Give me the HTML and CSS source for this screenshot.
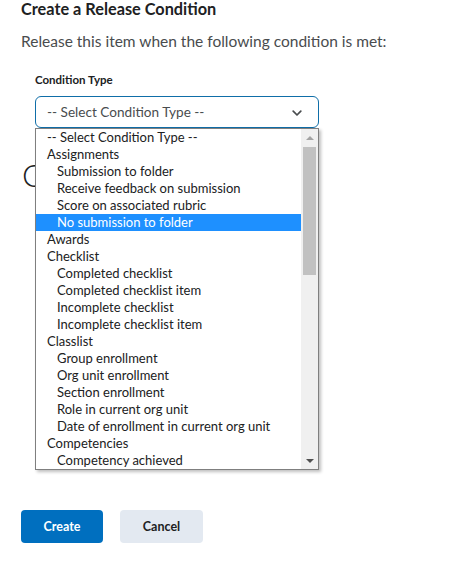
FILE: index.html
```html
<!DOCTYPE html>
<html lang="en">
<head>
<meta charset="utf-8">
<title>Create a Release Condition</title>
<link rel="stylesheet" href="styles.css">
</head>
<body>
<div class="page">
  <h1 class="title">Create a Release Condition</h1>
  <p class="intro">Release this item when the following condition is met:</p>

  <div class="field">
    <label class="field-label">Condition Type</label>
    <div class="select-wrap">
      <div class="select">
        <span class="select-text">-- Select Condition Type --</span>
        <svg class="chevron" width="10" height="7" viewBox="0 0 10 7"><path d="M1.2 1.2 L5 5 L8.8 1.2" fill="none" stroke="#494c4e" stroke-width="1.7" stroke-linecap="round" stroke-linejoin="round"/></svg>
      </div>
      <div class="dropdown">
        <ul class="options">
          <li class="group">-- Select Condition Type --</li>
          <li class="group">Assignments</li>
          <li class="opt">Submission to folder</li>
          <li class="opt">Receive feedback on submission</li>
          <li class="opt">Score on associated rubric</li>
          <li class="opt selected">No submission to folder</li>
          <li class="group">Awards</li>
          <li class="group">Checklist</li>
          <li class="opt">Completed checklist</li>
          <li class="opt">Completed checklist item</li>
          <li class="opt">Incomplete checklist</li>
          <li class="opt">Incomplete checklist item</li>
          <li class="group">Classlist</li>
          <li class="opt">Group enrollment</li>
          <li class="opt">Org unit enrollment</li>
          <li class="opt">Section enrollment</li>
          <li class="opt">Role in current org unit</li>
          <li class="opt">Date of enrollment in current org unit</li>
          <li class="group">Competencies</li>
          <li class="opt">Competency achieved</li>
        </ul>
        <div class="scrollbar">
          <div class="arrow up"></div>
          <div class="track"><div class="thumb"></div></div>
          <div class="arrow down"></div>
        </div>
      </div>
    </div>
  </div>

  <h2 class="section">Conditions</h2>

  <div class="actions">
    <button class="btn primary">Create</button>
    <button class="btn secondary">Cancel</button>
  </div>
</div>
</body>
</html>
```

FILE: styles.css
```css
* { box-sizing: border-box; }
html, body { margin: 0; padding: 0; background: #ffffff; }
body {
  font-family: Lato, "Open Sans", "Liberation Sans", sans-serif;
  color: #202122;
}
.page {
  padding: 0 0 0 21px;
  display: flex;
  flex-direction: column;
  align-items: flex-start;
}
.title {
  margin: 0;
  font-size: 16.3px;
  line-height: 18px;
  font-weight: 700;
  color: #202122;
}
.intro {
  margin: 11px 0 0;
  font-size: 15.5px;
  line-height: 24px;
  color: #494c4e;
}
.field {
  margin: 19px 0 0 14px;
  display: flex;
  flex-direction: column;
}
.field-label {
  font-size: 11.5px;
  line-height: 16px;
  font-weight: 700;
  color: #202122;
}
.select-wrap {
  position: relative;
  margin-top: 8px;
  z-index: 2;
}
.select {
  width: 284px;
  height: 32px;
  border: 1px solid #0f6ea8;
  border-radius: 6px;
  display: flex;
  align-items: center;
  justify-content: space-between;
  padding: 0 16px 0 11px;
  background: #fff;
}
.select-text {
  font-size: 13.6px;
  color: #494c4e;
}
.chevron { display: block; margin-top: 2px; }
.dropdown {
  position: absolute;
  top: 100%;
  left: 0;
  width: 284px;
  height: 342px;
  border: 1px solid #7f7f7f;
  background: #fff;
  box-shadow: 2px 2px 3px rgba(0,0,0,0.25);
  display: flex;
}
.options {
  list-style: none;
  margin: 0;
  padding: 0;
  flex: 1;
}
.options li {
  height: 17px;
  line-height: 16px;
  font-size: 13px;
  color: #202122;
  white-space: nowrap;
}
.options .group { padding-left: 11px; }
.options .opt { padding-left: 21px; }
.options .selected { background: #1e90ff; color: #ffffff; }
.scrollbar {
  width: 17px;
  background: #f0f0f0;
  display: flex;
  flex-direction: column;
  align-items: center;
}
.arrow {
  height: 17px;
  width: 17px;
  display: flex;
  align-items: center;
  justify-content: center;
}
.arrow::before {
  content: "";
  width: 0;
  height: 0;
  border-left: 4px solid transparent;
  border-right: 4px solid transparent;
}
.arrow.up::before { border-bottom: 4px solid #a3a3a3; }
.arrow.down::before { border-top: 4px solid #505050; }
.track {
  flex: 1;
  width: 17px;
  display: flex;
  justify-content: center;
}
.thumb {
  width: 13px;
  height: 128px;
  margin-top: 1px;
  background: #c1c1c1;
}
.section {
  margin: 27px 0 0 1px;
  font-size: 32px;
  line-height: 40px;
  font-weight: 300;
  color: #202122;
}
.actions {
  margin-top: 315px;
  display: flex;
  gap: 17px;
}
.btn {
  height: 33px;
  width: 82px;
  border: none;
  border-radius: 4px;
  font-family: Lato, "Open Sans", "Liberation Sans", sans-serif;
  font-size: 12.5px;
  font-weight: 700;
  padding: 0;
}
.btn.primary { background: #006fbf; color: #ffffff; }
.btn.secondary { background: #e3e9f1; color: #202122; width: 83px; }
```
